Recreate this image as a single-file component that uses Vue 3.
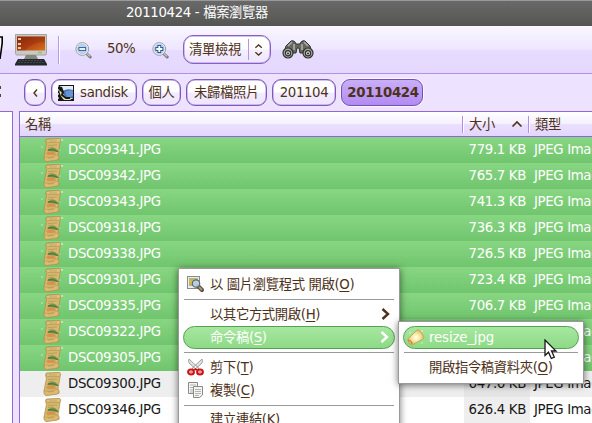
<script setup>
const files = [
  ['DSC09341.JPG', '779.1 KB'],
  ['DSC09342.JPG', '765.7 KB'],
  ['DSC09343.JPG', '741.3 KB'],
  ['DSC09318.JPG', '736.3 KB'],
  ['DSC09338.JPG', '726.5 KB'],
  ['DSC09301.JPG', '723.4 KB'],
  ['DSC09335.JPG', '706.7 KB'],
  ['DSC09322.JPG', '691.2 KB'],
  ['DSC09305.JPG', '668.3 KB'],
  ['DSC09300.JPG', '647.6 KB'],
  ['DSC09346.JPG', '626.4 KB'],
]
</script>

<template>
  <div class="window">
    <header class="title">20110424 - 檔案瀏覽器</header>

    <div class="toolbar">
      <svg class="edge-icon" width="4" height="30" viewBox="0 0 4 30">
        <path d="M0 2H2.2V8L0 24" fill="#fff" stroke="#000" stroke-width="1.6" />
      </svg>
      <svg class="computer" width="32" height="32" viewBox="0 0 32 32">
        <defs>
          <linearGradient id="screen" x1="0" y1="0" x2="1" y2="1">
            <stop offset="0" stop-color="#8e2a0c" /><stop offset=".5" stop-color="#b44313" /><stop offset="1" stop-color="#d8701c" />
          </linearGradient>
        </defs>
        <path d="M0.5 .5H31.5V19.5Q31.5 21 30 21H2Q.5 21 .5 19.5Z" fill="#c9cac2" stroke="#a3a49e" />
        <rect x="2" y="2.5" width="28" height="14" fill="url(#screen)" />
        <path d="M2 2.5H30V8Q17 8 10 16.5H2Z" fill="#7b210a" opacity=".25" />
        <g fill="#f3c4a0"><rect x="3" y="4" width="3" height="2" /><rect x="3" y="9" width="3" height="2" /><rect x="3" y="13" width="3" height="2" /></g>
        <path d="M23 18.5H27" stroke="#91c45d" stroke-width="1.5" />
        <path d="M11 21H21L23 25H9Z" fill="#85877f" />
        <path d="M3 25H29L32 30V31.5H0V30Z" fill="#23282a" />
        <path d="M4 26.5H28M3 28.5H29" stroke="#44494b" stroke-dasharray="2 1" />
      </svg>
      <i class="tool-sep"></i>
      <svg v-for="sign in ['minus', 'plus']" :key="sign" :class="['zoom', sign]" width="17" height="17" viewBox="0 0 17 17">
        <path d="M11 11L15.2 15" stroke="#777b7d" stroke-width="3" stroke-linecap="round" />
        <path d="M12 11.5L15 14.5" stroke="#c4c7c8" stroke-width="1.2" />
        <circle cx="7.3" cy="7" r="6.4" fill="#f3f6f9" stroke="#999da1" stroke-width="1" />
        <circle cx="7.3" cy="7" r="4.8" fill="#b9d2ee" stroke="#a8bfda" stroke-width=".7" />
        <path v-if="sign === 'minus'" d="M3.5 7H11" stroke="#2c5e9f" stroke-width="3.8" />
        <path v-else d="M3.3 7H11.3M7.3 3V11" stroke="#2c5e9f" stroke-width="3.8" />
        <path v-if="sign === 'minus'" d="M4.4 7H10.2" stroke="#fff" stroke-width="1.8" />
        <path v-else d="M4.3 7H10.3M7.3 4V10" stroke="#fff" stroke-width="1.8" />
      </svg>
      <span class="percent">50%</span>
      <div class="combo">
        <span>清單檢視</span><i></i>
        <svg width="10" height="14" viewBox="0 0 10 14"><path d="M1.5 4.5L5 1.5L8.5 4.5M1.5 9.5L5 12.5L8.5 9.5" fill="none" stroke="#4d351d" stroke-width="1.4" /></svg>
      </div>
      <svg class="binoculars" width="32" height="20" viewBox="0 0 32 20">
        <path d="M4 6L9 1Q11 0 13 2L14 4H18L19 2Q21 0 23 1L28 6L30 13H18L17 8H15L14 13H2Z" fill="#666860" stroke="#30332f" />
        <path d="M6 6L10 2M26 6L22 2M12 4V10M20 4V10" stroke="#a9aba3" stroke-width="1.7" />
        <g stroke="#30332f" stroke-width="1.2">
          <circle cx="6" cy="13" r="5" fill="#a6a8a0" /><circle cx="26" cy="13" r="5" fill="#a6a8a0" />
          <circle cx="6" cy="13.3" r="2.6" fill="#ddd" /><circle cx="26" cy="13.3" r="2.6" fill="#ddd" />
        </g>
        <circle cx="6" cy="13.5" r="1" fill="#242724" /><circle cx="26" cy="13.5" r="1" fill="#242724" />
      </svg>
    </div>

    <nav class="path">
      <div class="colon"><i></i><i></i></div>
      <button class="back"><svg width="7" height="10" viewBox="0 0 7 10"><path d="M5 1.5L2 5L5 8.5" fill="none" stroke="#4d351d" stroke-width="1.4" /></svg></button>
      <button class="disk">
        <svg width="16" height="16" viewBox="0 0 16 16">
          <rect width="16" height="16" fill="#16171a" /><path d="M3 1H15V14H5Z" fill="#426fb4" />
          <path d="M2 1H15V5Q9 3 5 6Z" fill="#e6ecf4" /><path d="M7 7Q11 4 15 6V11L9 13Z" fill="#6594d6" />
          <path d="M1 5Q6 9 7 11T15 13L12 15H6Q2 11 1 5Z" fill="#e9dcaa" />
          <path d="M3 2L5 7L4 10L8 13L12 13" fill="none" stroke="#171a1c" stroke-width="2" />
          <path d="M.5 0V16" stroke="#ddd" stroke-width=".7" stroke-dasharray="2 2" />
        </svg>
        <span>sandisk</span>
      </button>
      <button class="personal">個人</button>
      <button class="photos">未歸檔照片</button>
      <button class="month">201104</button>
      <button class="day">20110424</button>
    </nav>

    <main class="content">
      <aside></aside>
      <section class="list">
        <div class="head">
          <span class="name-head">名稱</span>
          <span class="size-head">大小<svg width="12" height="8" viewBox="0 0 12 8"><path d="M1.5 6.5L6 2L10.5 6.5" fill="none" stroke="#4d351d" stroke-width="1.7" /></svg></span>
          <span class="type-head">類型</span>
        </div>
        <div v-for="([name, size], i) in files" :key="name" :class="['row', { selected: i < 9, odd: i === 9 }]">
          <svg class="scroll" width="24" height="26" viewBox="0 0 24 26">
            <path d="M5 2.5Q4 5 5.5 7L3 20Q2.5 23.5 5 24.5L16 23Q19 23 18 20L17 18L19 6Q20 2 18 1.5L6 2Z" fill="#d5b76d" stroke="#ad8a48" stroke-width=".7" />
            <path d="M5 2.5L19 1.5Q20.5 5 17 5.5H7Q5 5.5 5 2.5Z" fill="#dfc47e" stroke="#b28f4e" stroke-width=".6" />
            <path d="M3 20L8 20.5L17 18Q19 21 16 23L5 24.5Q3 23 3 20Z" fill="#dcbb70" stroke="#b28f4e" stroke-width=".5" />
            <path d="M7 8.5L16 8M7 10.5L12 10M6 18L15 17M7 21L13 20.5M8 4H16" stroke="#b39557" stroke-width=".7" />
            <path d="M6 14Q8 10.5 12 10.5Q16 11 17 15Z" fill="#76984d" />
            <path d="M7 13Q12 11.8 17 14.5" fill="none" stroke="#4f793f" stroke-width="1.4" />
            <path d="M5.5 15.5Q10 13.5 15 16L13 17.3Q9 18.3 5.5 17Z" fill="#dc9148" />
            <g fill="#edf5dc" opacity=".75"><circle cx="1" cy="10" r=".8" /><circle cx="21" cy="3" r="1" /><circle cx="19" cy="13" r=".6" /></g>
          </svg>
          <span class="name">{{ name }}</span><span class="size">{{ size }}</span><span class="type">JPEG Image</span>
        </div>
      </section>
    </main>

    <div class="menu">
      <div class="item first">
        <svg class="icon" width="18" height="17" viewBox="0 0 18 17">
          <rect x=".5" y=".5" width="12" height="12" fill="#eeeeec" stroke="#888a85" /><rect x="2" y="2" width="9" height="8" fill="#acb884" />
          <path d="M2 3L5 5L8 2L9 5L4 9L3 6Z" fill="#eab83b" />
          <path d="M11 10L15 14" stroke="#454e59" stroke-width="4" stroke-linecap="round" /><path d="M12 11L15 14" stroke="#c5934e" stroke-width="2" />
          <circle cx="9" cy="7.5" r="3.7" fill="#bdd0e1" fill-opacity=".9" stroke="#596878" stroke-width="1.2" />
        </svg>以 圖片瀏覽程式 開啟(<u>O</u>)
      </div>
      <hr />
      <div class="item other">以其它方式開啟(<u>H</u>)<svg class="chevron" width="9" height="14" viewBox="0 0 9 14"><path d="M1.5 2L7 7L1.5 12" /></svg></div>
      <div class="item highlight">命令稿(<u>S</u>)<svg class="chevron" width="9" height="14" viewBox="0 0 9 14"><path d="M1.5 2L7 7L1.5 12" /></svg></div>
      <hr />
      <div class="item cut">
        <svg class="icon" width="18" height="17" viewBox="0 0 18 17">
          <path d="M2 0Q.5 3 3 5L10 11L12 9.5ZM15 0Q16.5 3 14 5L7 11L5 9.5Z" fill="#e4e6e3" stroke="#888a85" stroke-width=".8" />
          <g fill="#fff" stroke="#cc1212" stroke-width="2.2"><ellipse cx="4" cy="13" rx="2.8" ry="2.5" /><ellipse cx="13" cy="13" rx="2.8" ry="2.5" /></g>
          <g fill="#cc1212"><circle cx="4" cy="13" r=".8" /><circle cx="13" cy="13" r=".8" /><path d="M6 11L8.5 9L11 11L9 11.5Z" /></g>
        </svg>剪下(<u>T</u>)
      </div>
      <div class="item copy">
        <svg class="icon" width="18" height="17" viewBox="0 0 18 17">
          <g fill="#f4f4f2" stroke="#888a85"><path d="M1.5 .5H10.5V11.5H1.5Z" /><path d="M6.5 4.5H15.5V13L12.5 15.5H6.5Z" /></g>
          <path d="M3 3H9M3 5.5H6M3 8H6M3 10H6M8 7.5H14M8 9.5H14M8 11.5H14M8 13.5H12" stroke="#b3b5b1" />
        </svg>複製(<u>C</u>)
      </div>
      <hr />
      <div class="item link">建立連結(<u>K</u>)</div>
    </div>

    <div class="submenu">
      <div class="item highlight">
        <svg class="icon" width="18" height="17" viewBox="0 0 18 17">
          <defs><radialGradient id="glow"><stop offset="0" stop-color="#fffff0" /><stop offset=".45" stop-color="#f8ecab" /><stop offset="1" stop-color="#ddb866" /></radialGradient></defs>
          <path d="M10 1Q12 0 14 3L17 8Q17 10 14 11L5 16Q2 16 1 12Q0 9 3 8Z" fill="url(#glow)" stroke="#c89e4c" stroke-width=".8" />
          <path d="M1 12Q4 10 5 15" fill="none" stroke="#aa7b35" /><g fill="#f5f8c8"><circle cx="3" cy="4" r=".8" /><circle cx="15" cy="2" r=".8" /><circle cx="15" cy="14" r=".7" /></g>
        </svg>resize_jpg
      </div>
      <hr />
      <div class="item folder">開啟指令稿資料夾(<u>O</u>)</div>
    </div>

    <svg class="cursor" width="14" height="22" viewBox="0 0 14 22"><path d="M1 1V16.5L4.5 13.2L7.3 19.5L10.3 18.1L7.5 12H12Z" fill="#fff" stroke="#171717" stroke-width="1.3" /></svg>
  </div>
</template>

<style>
body { margin: 0; overflow: hidden; }
</style>

<style scoped>
* { box-sizing: border-box; }
.window { position: relative; width: 592px; height: 423px; overflow: hidden; display: flex; flex-direction: column; background: #ede2ff; color: #4d3118; font: 13.33px/20px "DejaVu Sans", "Noto Sans CJK TC", sans-serif; letter-spacing: -.36px; white-space: nowrap; }
.title { flex: 0 0 26px; padding: 1px 0 0 126px; border-top: 1px solid #999; background: linear-gradient(#696969, #555553); color: #fff; line-height: 22px; }
.toolbar { flex: 0 0 48px; display: flex; align-items: flex-start; border-bottom: 1px solid #b18ee8; background: linear-gradient(#faf7ff 0, #eee6ff 50%, #e7dcff 51%, #e4d8ff 100%); }
.toolbar > * { flex-shrink: 0; }
.edge-icon { margin-top: 9px; }
.computer { margin: 8px 0 0 11px; }
.tool-sep { width: 2px; height: 28px; margin: 10px 0 0 11px; background: linear-gradient(90deg, #b997f1 50%, #fff 50%); }
.zoom { margin-top: 16px; }
.minus { order: 1; margin-left: 15px; }
.percent { order: 2; width: 29px; margin: 13px 0 0 15px; letter-spacing: -.45px; }
.plus { order: 3; margin-left: 16px; }
.combo { order: 4; width: 88px; height: 29px; margin: 9px 0 0 14px; padding: 0 7px 0 5px; display: flex; align-items: center; border: 1px solid #885fc4; border-radius: 10px; background: linear-gradient(#fff 48%, #f5efff 52%, #eee6ff); box-shadow: inset 0 0 0 .5px #a887dc; }
.combo i { width: 1px; height: 21px; margin: 0 5px 0 7px; background: #b795ee; }
.binoculars { order: 5; margin: 14px 0 0 11px; }
.path { flex: 0 0 37px; display: flex; align-items: flex-start; padding-top: 5px; }
.path button { height: 27px; padding: 0; flex-shrink: 0; display: flex; align-items: center; justify-content: center; border: 1px solid #8058bd; border-radius: 9px; background: linear-gradient(#fff 48%, #f3ebff 52%, #eee5ff); box-shadow: inset 0 0 0 .5px #a887dc, 0 0 1px #fff; color: inherit; font: inherit; letter-spacing: inherit; }
.colon { width: 24px; padding-top: 7px; }
.colon i { display: block; width: 1px; height: 3px; margin-bottom: 5px; background: #574332; }
.path .back { width: 22px; margin-right: 5px; }
.path .disk { width: 86px; margin-right: 5px; padding-right: 2px; gap: 6px; }
.path .personal { width: 39px; margin-right: 5px; }
.path .photos { width: 81px; margin-right: 5px; }
.path .month { width: 64px; margin-right: 5px; }
.path .day { width: 82px; padding-left: 2px; background: linear-gradient(#c9aff9, #b28bf2); border-color: #7651b2; font-weight: bold; box-shadow: 0 0 0 1px #f9f4ff; }
.content { flex: 1; min-height: 0; display: flex; }
aside { width: 13px; margin-right: 6px; flex-shrink: 0; border: solid #9167da; border-width: 1px 1px 0 0; background: #fff; }
.list { flex: 1; min-width: 0; border: solid #9167da; border-width: 1px 0 0 1px; background: #fff; }
.head { height: 25px; display: grid; grid-template-columns: 442px 66px 1fr; align-items: center; border-bottom: 1px solid #9761e4; background: linear-gradient(#fff 0, #f5f0ff 50%, #ebe0ff 51%, #e3d5ff); }
.head > span { height: 17px; line-height: 17px; }
.name-head { padding-left: 5px; }
.size-head, .type-head { padding-left: 6px; border-left: 1px solid #b38cef; box-shadow: inset 1px 0 #fff; }
.size-head { display: flex; justify-content: space-between; align-items: center; padding-right: 5px; }
.row { height: 26px; display: grid; grid-template-columns: 21px 27px 396px 62px 1fr; align-items: center; color: #171717; line-height: 24px; padding-bottom: 2px; background: #fff; }
.row.selected { color: #fff; background: linear-gradient(#88d683, #70c56d); }
.row.odd { background: linear-gradient(90deg, #eee 444px, #e5e5e5 444px, #e5e5e5 510px, #eee 510px); }
.row:last-child { background: linear-gradient(90deg, #fff 444px, #eee 444px, #eee 510px, #fff 510px); }
.scroll { grid-column: 2; align-self: start; }
.size { text-align: right; }
.type { padding-left: 8px; }
.menu, .submenu { position: absolute; background: #fff; border: 1px solid #999; box-shadow: 0 1px 7px rgba(0, 0, 0, .55); }
.menu { left: 178px; top: 268px; width: 222px; height: 170px; padding: 4px; }
.submenu { left: 398px; top: 321px; width: 186px; height: 63px; padding: 4px; }
.item { position: relative; height: 23px; padding-left: 27px; line-height: 23px; }
.menu .first { height: 26px; line-height: 23px; }
.item u { text-decoration-thickness: 1px; text-underline-offset: 2px; }
hr { height: 1px; margin: 0 1px; border: 0; background: #999; }
.menu .other { height: 26px; padding-top: 3px; }
.highlight { color: #fff; border: 1px solid #55a150; border-radius: 12px; background: linear-gradient(#a7e7a0, #8dda87); line-height: 21px; padding-left: 26px; }
.submenu .highlight { padding-left: 25px; letter-spacing: -.15px; }
.highlight + hr { margin-top: 3px; }
.menu .cut { height: 26px; padding-top: 3px; }
.menu .copy { height: 26px; }
.menu .link { padding-top: 2px; }
.submenu .folder { height: 26px; padding: 3px 0 0 26px; }
.icon { position: absolute; left: 4px; top: 3px; }
.menu .cut .icon { top: 6px; }
.highlight .icon { left: 3px; top: 2px; }
.chevron { position: absolute; right: 5px; top: 7px; fill: none; stroke: #4d3118; stroke-width: 2.4; }
.highlight .chevron { top: 3px; stroke: #fff; }
.cursor { position: absolute; left: 544px; top: 339px; }
</style>
